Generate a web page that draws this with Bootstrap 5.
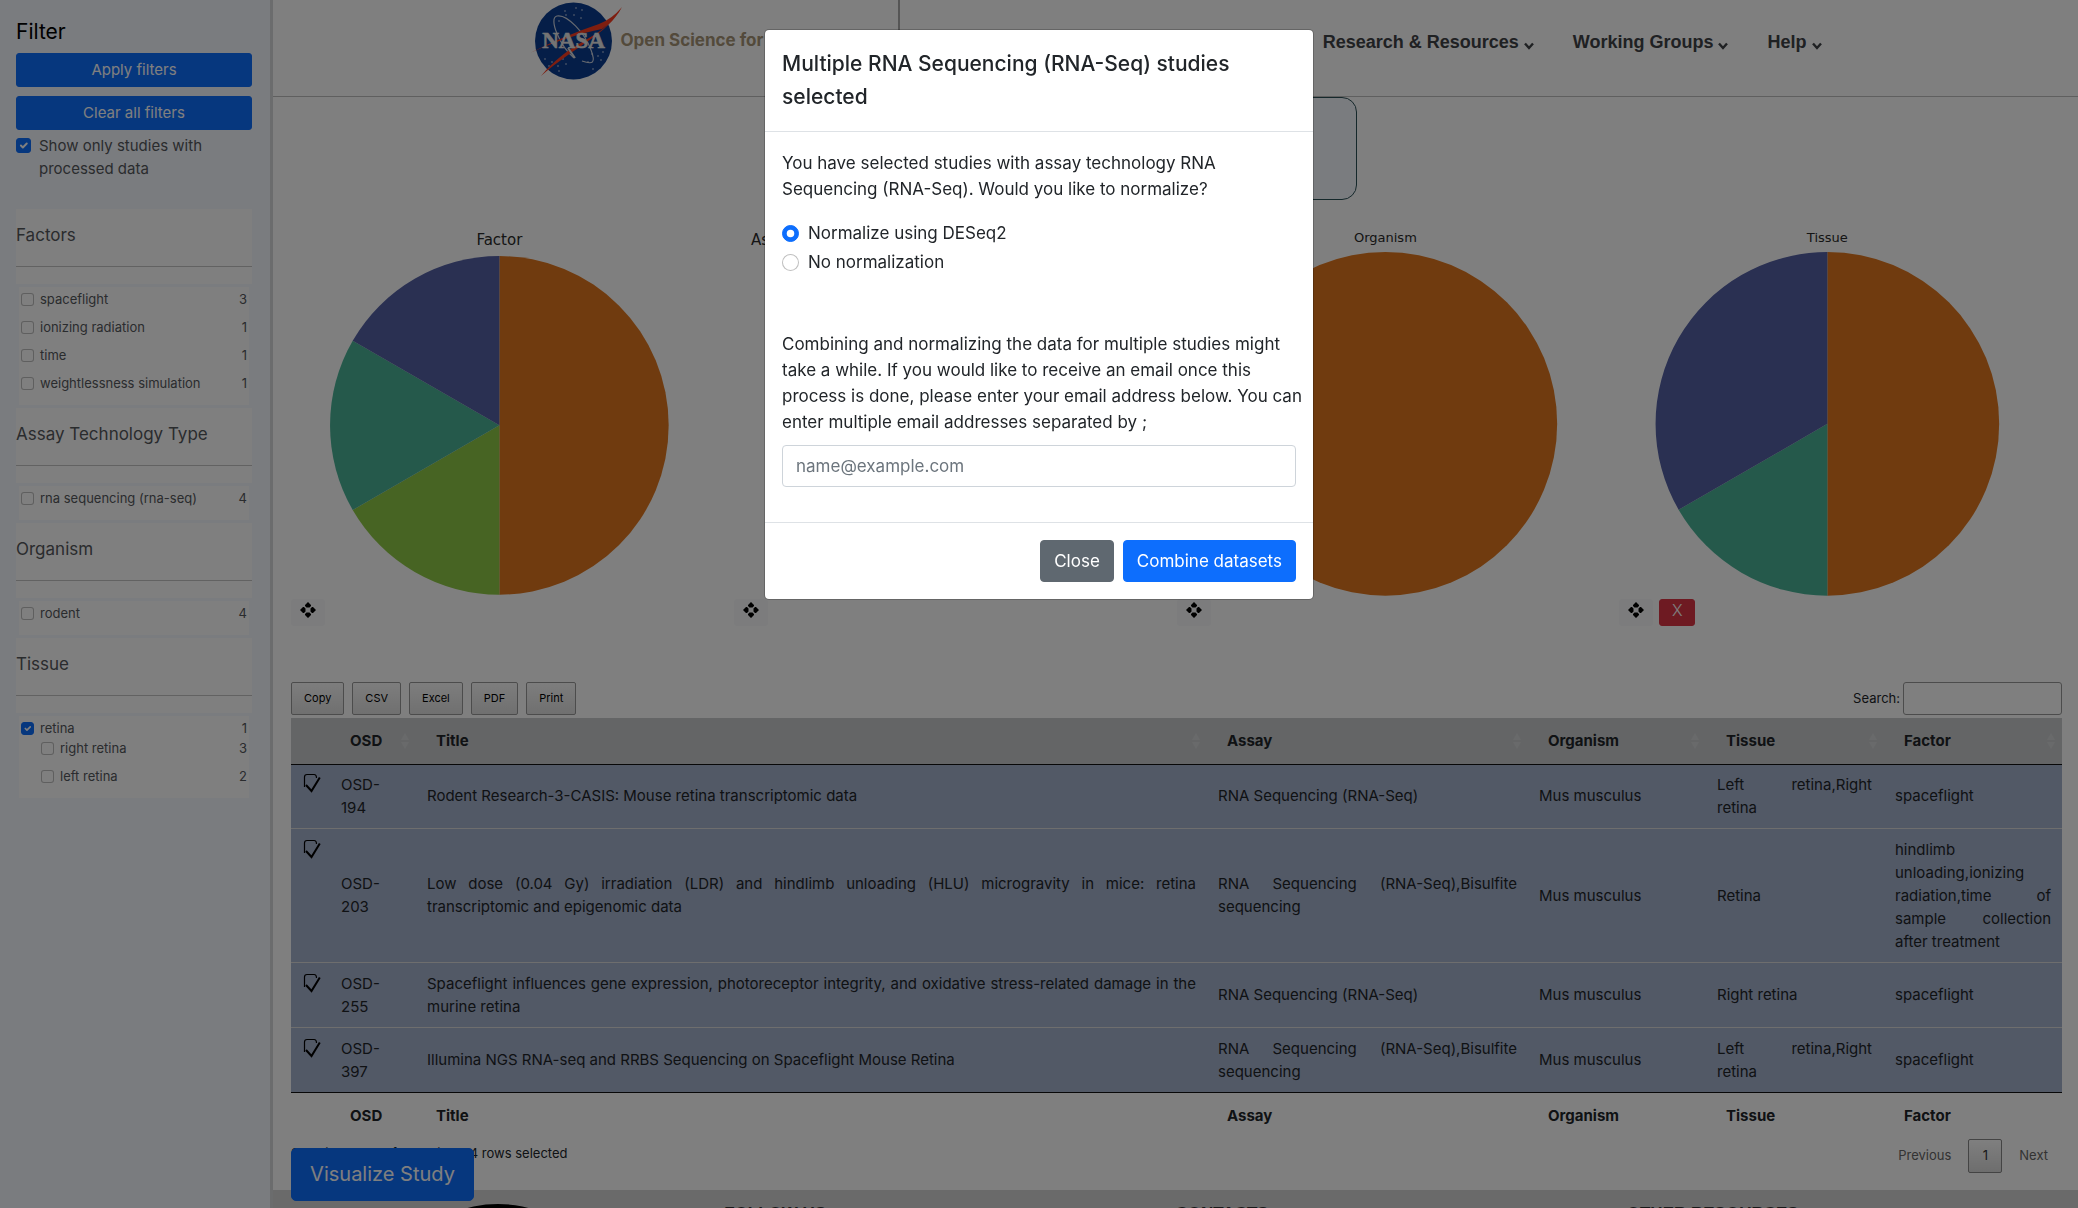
<!DOCTYPE html>
<html lang="en">
<head>
<meta charset="utf-8">
<meta name="viewport" content="width=device-width, initial-scale=1">
<title>Multi-study selection</title>
<link href="https://cdn.jsdelivr.net/npm/bootstrap@5.3.0/dist/css/bootstrap.min.css" rel="stylesheet">
<style>
body{font-family:Inter,"Liberation Sans",sans-serif;font-size:15px;line-height:23px;color:#212529;background:#fff}
/* sidebar */
.side{width:273px;flex:none;background:#f5f8ff;border-right:3px solid #d6d8da;padding:16px 18px 16px 16px;color:#55585c;min-height:1400px}
.side h1{font-size:21px;line-height:32px;color:#000;margin:0 0 5px;font-weight:400}
.side .btn{font-size:15px;line-height:22px;padding:5px;border-radius:3px;margin-bottom:9px}
.side .btn-primary,.viz{--bs-btn-bg:#0d6efd;--bs-btn-border-color:#0d6efd}
.form-check-input{border-color:rgba(0,0,0,.25)}
.form-check-input:checked{background-color:#0d6efd;border-color:#0d6efd}
.only{gap:8px;margin-top:-5px;margin-bottom:29px}
.only .form-check-input{width:15px;height:15px;margin:4px 0 0;flex:none}
.only label{font-size:15px;line-height:23px}
.facet{background:#fff;padding:14px 0 17px}
.facet h2{font-size:17px;line-height:24px;font-weight:400;margin:0 0 19px}
.facet hr{margin:0;border-top:1px solid #c4c4c4;opacity:1}
.opts{background:#fff;margin:3px;padding:0 2px 6px;list-style:none;font-size:13px}
.opts li{display:flex;align-items:center;height:24px;margin-bottom:4px}
.opts li.tight{margin-bottom:-4px}
.opts li.sub{padding-left:20px}
.opts .form-check-input{width:13px;height:13px;margin:0 6px 0 0;flex:none}
.opts .form-check-input,.only .form-check-input{border-radius:3px}
/* site header */
.top{height:97px;border-bottom:1px solid #bfbfbf}
.top-in{max-width:1292px;margin:0 auto}
.brand{width:368px;height:81px;color:#a69477;font-size:17px;font-weight:700;white-space:nowrap;text-decoration:none}
.brand svg{flex:none}
.brand span{margin-left:-3px}
.rule{width:2px;height:70px;background:#aaa}
.menu{gap:39px;font:700 18px/24px "Liberation Sans",Arial,sans-serif;padding-top:30px}
.menu a{color:#3f4246;text-decoration:none;white-space:nowrap}
.menu svg{margin-bottom:-6px}
.intro{width:362px;height:103px;margin:0 auto 26px;background:#f5f8ff;border:1px solid #2b5056;border-radius:15px}
.wrap{padding:0 16px 0 18px}
/* charts */
.plot{padding-right:24px}
.plot svg.pie{display:block;width:100%;height:auto}
.plot text{font-family:"DejaVu Sans",sans-serif;fill:#2a2a2a;text-anchor:middle}
.plot text.from-left{text-anchor:start}
.tools .btn{width:34px;height:27px;padding:0 0 4px;border-radius:3px;font-size:16px;line-height:18px;display:block}
.tools .btn svg{display:block;margin:0 auto}
.tools .btn-light{--bs-btn-bg:#f8f9fa;--bs-btn-border-color:#f8f9fa;margin-right:6px}
.tools .btn-danger{font-weight:300;width:36px}
/* table tools */
.bar{margin:56px 0 3px}
.dt-btn{height:33px;border:1px solid #999;border-radius:2px;background:linear-gradient(#fbfbfb,#e0e0e0);font-size:11px;padding:0 12px;color:#000}
.find{font-size:13px}
.find input{width:159px;height:33px;border:1px solid #999;border-radius:3px;margin-left:3px}
.studies{width:100%;table-layout:fixed;margin-bottom:0}
.studies th{padding:11px 20px 12px;font-weight:700}
.studies thead th{background:#c9cbcd;position:relative}
.studies thead tr{border-bottom:1px solid #111}
.studies th i{position:absolute;right:7px;top:15px}
.studies th i::before,.studies th i::after{content:"";display:block;border:4px solid transparent}
.studies th i::before{border-top:0;border-bottom:7px solid #d3d5d6;margin-bottom:2px}
.studies th i::after{border-bottom:0;border-top:7px solid #d3d5d6}
.studies td{padding:9px 11px;background:#a5b2cd;border-top:1px solid #ddd;vertical-align:middle;text-align:justify}
.studies td:nth-child(2){padding-right:20px}
.studies td:nth-child(6){padding-right:12px}
.studies tbody tr:first-child td{border-top:0;padding-top:8px}
.studies td.pick{vertical-align:top;padding:10px 0 0 12px}
.studies td.pick svg{display:block}
.studies tfoot{border-top:1px solid #111}
.info{font-size:13px;padding-top:3px}
.info span{margin-left:15px}
.pager{font-size:13px}
.pager button{border:0;background:none;color:#666;padding:0 17px;height:34px}
.pager button:last-child{padding-right:14px}
.pager .now{border:1px solid #888;border-radius:2px;background:linear-gradient(#fff,#dcdcdc);color:#333;padding:0;width:34px}
.viz{position:fixed;left:291px;bottom:7px;width:183px;height:53px;font-size:20px;line-height:33px;border-radius:5px;padding:0}
.foot{background:#d4d4d4;height:220px;margin-top:17px;padding-top:14px;font:700 17px/20px "Liberation Sans",Arial,sans-serif;color:#333}
.seal{width:250px;height:250px;border-radius:50%;background:#000;margin-left:100px}
/* dialog */
.modal-dialog{max-width:550px;margin:29px auto}
.modal-content{border-radius:5px;font-size:17px;line-height:26px;border:1px solid rgba(0,0,0,.2)}
.modal-header{padding:17px 17px 18px;border-color:#dee2e6}
.modal-title{font-size:21px;line-height:33px;font-weight:500}
.modal-body{padding:18px 17px 35px}
.modal-body p{margin-bottom:18px}
.norm{display:flex;align-items:center;height:26px;margin-bottom:3px}
.norm .form-check-input{width:17px;height:17px;margin:0 9px 0 0}
.mail-label{margin:56px -8px 10px 0;display:block}
.modal-body .form-control{font-size:17px;line-height:26px;padding:7px 13px;height:42px;border-color:#ced4da;border-radius:4px;color:#212529}
.modal-body .form-control::placeholder{color:#6c757d;opacity:1}
.modal-footer{padding:17px;border-color:#dee2e6;gap:9px}
.modal-footer .btn{font-size:17px;line-height:26px;padding:7px 13px;margin:0;border-radius:4px}
.modal-footer .btn-secondary{--bs-btn-bg:#5f6870;--bs-btn-border-color:#5f6870}
</style>
<script src="https://cdn.jsdelivr.net/npm/bootstrap@5.3.0/dist/js/bootstrap.bundle.min.js"></script>
</head>
<body class="modal-open overflow-hidden">
<svg width="0" height="0" class="position-absolute">
  <symbol id="move" viewBox="0 0 16 16"><path d="M8 0 11 3v1L9.500 5.500h-3L5 4V3zM8 16 5 13v-1l1.500-1.500h3L11 12v1zM0 8l3-3h1l1.500 1.500v3L4 11H3zM16 8l-3 3h-1l-1.500-1.500v-3L12 5h1z"/></symbol>
  <symbol id="tick" viewBox="0 0 18 20"><path d="M1.500 14V4Q1.500 1.500 4 1.500h7Q13.500 1.500 13.500 5" fill="none" stroke="#000" stroke-width="1.200"/><path d="M3 12 8.500 18 16.800 4.500" fill="none" stroke="#000" stroke-width="2"/></symbol>
  <symbol id="chev" viewBox="0 0 10 8"><path d="M1 1.500 5 6l4-4.500" fill="none" stroke="#3f4246" stroke-width="2.400"/></symbol>
</svg>
<div class="d-flex">
  <aside class="side">
    <h1>Filter</h1>
    <button class="btn btn-primary w-100 d-block" type="button">Apply filters</button>
    <button class="btn btn-primary w-100 d-block" type="button">Clear all filters</button>
    <div class="only d-flex"><input class="form-check-input" type="checkbox" id="proc" checked><label for="proc">Show only studies with processed data</label></div>

    <div class="facet"><h2>Factors</h2><hr></div>
    <ul class="opts">
      <li><input class="form-check-input" type="checkbox" id="f1"><label for="f1">spaceflight</label><span class="ms-auto">3</span></li>
      <li><input class="form-check-input" type="checkbox" id="f2"><label for="f2">ionizing radiation</label><span class="ms-auto">1</span></li>
      <li><input class="form-check-input" type="checkbox" id="f3"><label for="f3">time</label><span class="ms-auto">1</span></li>
      <li><input class="form-check-input" type="checkbox" id="f4"><label for="f4">weightlessness simulation</label><span class="ms-auto">1</span></li>
    </ul>
    <div class="facet"><h2>Assay Technology Type</h2><hr></div>
    <ul class="opts">
      <li><input class="form-check-input" type="checkbox" id="a1"><label for="a1">rna sequencing (rna-seq)</label><span class="ms-auto">4</span></li>
    </ul>
    <div class="facet"><h2>Organism</h2><hr></div>
    <ul class="opts">
      <li><input class="form-check-input" type="checkbox" id="o1"><label for="o1">rodent</label><span class="ms-auto">4</span></li>
    </ul>
    <div class="facet"><h2>Tissue</h2><hr></div>
    <ul class="opts">
      <li class="tight"><input class="form-check-input" type="checkbox" id="t1" checked><label for="t1">retina</label><span class="ms-auto">1</span></li>
      <li class="sub"><input class="form-check-input" type="checkbox" id="t2"><label for="t2">right retina</label><span class="ms-auto">3</span></li>
      <li class="sub"><input class="form-check-input" type="checkbox" id="t3"><label for="t3">left retina</label><span class="ms-auto">2</span></li>
    </ul>
  </aside>

  <div class="flex-grow-1" style="min-width:0">
    <header class="top">
      <div class="top-in d-flex">
        <a class="brand d-flex align-items-center" href="#">
          <svg width="94" height="81" viewBox="0 0 94 81">
            <circle cx="43.500" cy="41" r="38.500" fill="#0b3d91"/>
            <g fill="#c9d4e6"><circle cx="35" cy="11" r=".8"/><circle cx="44" cy="15" r=".8"/><circle cx="46" cy="8" r=".8"/><circle cx="52" cy="10" r=".8"/><circle cx="51" cy="18" r=".8"/><circle cx="36" cy="15" r=".8"/><circle cx="29" cy="21" r=".8"/><circle cx="15" cy="59" r=".8"/><circle cx="22" cy="62" r=".8"/><circle cx="28" cy="66" r=".8"/><circle cx="19" cy="66" r=".8"/><circle cx="33" cy="59" r=".8"/><circle cx="36" cy="64" r=".8"/><circle cx="68" cy="56" r=".8"/><circle cx="73" cy="52" r=".8"/><circle cx="71" cy="60" r=".8"/><circle cx="62" cy="54" r=".8"/><circle cx="58" cy="62" r=".8"/><circle cx="29" cy="71" r=".8"/><circle cx="63" cy="69" r=".8"/></g>
            <path d="M44 58C30 46 18 18 27 16c10-2 28 17 34 34 5 13 2 15-9 11" fill="none" stroke="#ccd3e0" stroke-width="1.200"/>
            <path d="M92 7Q82 22 72 29 40 35 0 53 36 35 69 24 82 19 92 7zM92 7C78 34 44 47 11 76 38 44 62 40 76 26z" fill="#fc3d21"/>
            <text x="43.500" y="48" text-anchor="middle" font-family="Liberation Serif" font-weight="700" font-size="23" fill="#e8e8e8" stroke="#e8e8e8" stroke-width=".6">NASA</text>
            <path d="M38 48l7 10" stroke="#ddd" stroke-width="2"/>
          </svg>
          <span>Open Science for Life in Space</span>
        </a>
        <div class="rule"></div>
        <nav class="menu d-flex ms-auto">
          <a href="#">Data &amp; Tools</a>
          <a href="#">Research &amp; Resources <svg width="10" height="8"><use href="#chev"/></svg></a>
          <a href="#">Working Groups <svg width="10" height="8"><use href="#chev"/></svg></a>
          <a href="#">Help <svg width="10" height="8"><use href="#chev"/></svg></a>
        </nav>
      </div>
    </header>
    <div class="intro"></div>

    <main class="wrap">
      <div class="row g-0">
        <div class="col-3">
          <div class="plot"><svg class="pie" viewBox="0 0 418 372"><text x="208" y="19" font-size="15">Factor</text>
            <path d="M208 199V30a169 169 0 0 1 0 338z" fill="#e0771f"/><path d="M208 199v169A169 169 0 0 1 61.600 283.500z" fill="#8fc847"/><path d="M208 199 61.600 283.500a169 169 0 0 1 0-169z" fill="#4ab397"/><path d="M208 199 61.600 114.500A169 169 0 0 1 208 30z" fill="#5460a4"/></svg></div>
          <div class="tools d-flex"><button class="btn btn-light" type="button" aria-label="Move"><svg width="16" height="16"><use href="#move"/></svg></button></div>
        </div>
        <div class="col-3">
          <div class="plot"><svg class="pie" viewBox="0 0 418 372"><text class="from-left" x="17" y="19" font-size="15">Assay Technology Type</text><circle cx="208" cy="199" r="169" fill="#e0771f"/></svg></div>
          <div class="tools d-flex"><button class="btn btn-light" type="button" aria-label="Move"><svg width="16" height="16"><use href="#move"/></svg></button></div>
        </div>
        <div class="col-3">
          <div class="plot"><svg class="pie" viewBox="0 0 418 372"><text x="208" y="16" font-size="13">Organism</text><circle cx="208" cy="197.500" r="171.500" fill="#e0771f"/></svg></div>
          <div class="tools d-flex"><button class="btn btn-light" type="button" aria-label="Move"><svg width="16" height="16"><use href="#move"/></svg></button></div>
        </div>
        <div class="col-3">
          <div class="plot"><svg class="pie" viewBox="0 0 418 372"><text x="208" y="16" font-size="13">Tissue</text>
            <path d="M208 197.500V26a171.500 171.500 0 0 1 0 343z" fill="#e0771f"/><path d="M208 197.500V369A171.500 171.500 0 0 1 59.500 283.300z" fill="#4ab397"/><path d="M208 197.500 59.500 283.300A171.500 171.500 0 0 1 208 26z" fill="#5460a4"/></svg></div>
          <div class="tools d-flex"><button class="btn btn-light" type="button" aria-label="Move"><svg width="16" height="16"><use href="#move"/></svg></button><button class="btn btn-danger" type="button">X</button></div>
        </div>
      </div>

      <div class="bar d-flex align-items-center">
        <div class="d-flex gap-2">
          <button class="dt-btn" type="button">Copy</button><button class="dt-btn" type="button">CSV</button><button class="dt-btn" type="button">Excel</button><button class="dt-btn" type="button">PDF</button><button class="dt-btn" type="button">Print</button>
        </div>
        <div class="find ms-auto d-flex align-items-center"><label for="q">Search:</label><input id="q" type="search"></div>
      </div>

      <table class="studies">
        <colgroup><col style="width:39px"><col style="width:86px"><col><col style="width:321px"><col style="width:178px"><col style="width:178px"><col style="width:178px"></colgroup>
        <thead><tr><th></th><th>OSD<i></i></th><th>Title<i></i></th><th>Assay<i></i></th><th>Organism<i></i></th><th>Tissue<i></i></th><th>Factor<i></i></th></tr></thead>
        <tbody>
          <tr><td class="pick"><svg width="18" height="20"><use href="#tick"/></svg></td><td>OSD-194</td><td>Rodent Research-3-CASIS: Mouse retina transcriptomic data</td><td>RNA Sequencing (RNA-Seq)</td><td>Mus musculus</td><td>Left retina,Right retina</td><td>spaceflight</td></tr>
          <tr><td class="pick"><svg width="18" height="20"><use href="#tick"/></svg></td><td>OSD-203</td><td>Low dose (0.04 Gy) irradiation (LDR) and hindlimb unloading (HLU) microgravity in mice: retina transcriptomic and epigenomic data</td><td>RNA Sequencing (RNA-Seq),Bisulfite sequencing</td><td>Mus musculus</td><td>Retina</td><td>hindlimb unloading,ionizing radiation,time of sample collection after treatment</td></tr>
          <tr><td class="pick"><svg width="18" height="20"><use href="#tick"/></svg></td><td>OSD-255</td><td>Spaceflight influences gene expression, photoreceptor integrity, and oxidative stress-related damage in the murine retina</td><td>RNA Sequencing (RNA-Seq)</td><td>Mus musculus</td><td>Right retina</td><td>spaceflight</td></tr>
          <tr><td class="pick"><svg width="18" height="20"><use href="#tick"/></svg></td><td>OSD-397</td><td>Illumina NGS RNA-seq and RRBS Sequencing on Spaceflight Mouse Retina</td><td>RNA Sequencing (RNA-Seq),Bisulfite sequencing</td><td>Mus musculus</td><td>Left retina,Right retina</td><td>spaceflight</td></tr>
        </tbody>
        <tfoot><tr><th></th><th>OSD</th><th>Title</th><th>Assay</th><th>Organism</th><th>Tissue</th><th>Factor</th></tr></tfoot>
      </table>
      <div class="d-flex justify-content-between">
        <div class="info">Showing 1 to 4 of 4 entries<span>4 rows selected</span></div>
        <div class="pager d-flex"><button type="button">Previous</button><button class="now" type="button">1</button><button type="button">Next</button></div>
      </div>
    </main>
    <footer class="foot"><div class="row g-0"><div class="col-3"><div class="seal"></div></div><div class="col-3">FOLLOW US</div><div class="col-3">CONTACTS</div><div class="col-3">OTHER RESOURCES</div></div></footer>
  </div>
</div>
<button class="btn btn-primary viz" type="button">Visualize Study</button>

<div class="modal-backdrop show"></div>
<div class="modal d-block" role="dialog" aria-modal="true" aria-labelledby="mt" tabindex="-1">
  <div class="modal-dialog">
    <div class="modal-content">
      <div class="modal-header"><h5 class="modal-title" id="mt">Multiple RNA Sequencing (RNA-Seq) studies selected</h5></div>
      <div class="modal-body">
        <p>You have selected studies with assay technology RNA Sequencing (RNA-Seq). Would you like to normalize?</p>
        <div class="norm"><input class="form-check-input" type="radio" name="norm" id="n1" checked><label for="n1">Normalize using DESeq2</label></div>
        <div class="norm"><input class="form-check-input" type="radio" name="norm" id="n2"><label for="n2">No normalization</label></div>
        <label class="mail-label" for="mail">Combining and normalizing the data for multiple studies might take a while. If you would like to receive an email once this process is done, please enter your email address below. You can enter multiple email addresses separated by ;</label>
        <input class="form-control" type="email" id="mail" placeholder="name@example.com">
      </div>
      <div class="modal-footer"><button class="btn btn-secondary" type="button">Close</button><button class="btn btn-primary" type="button">Combine datasets</button></div>
    </div>
  </div>
</div>
</body>
</html>
